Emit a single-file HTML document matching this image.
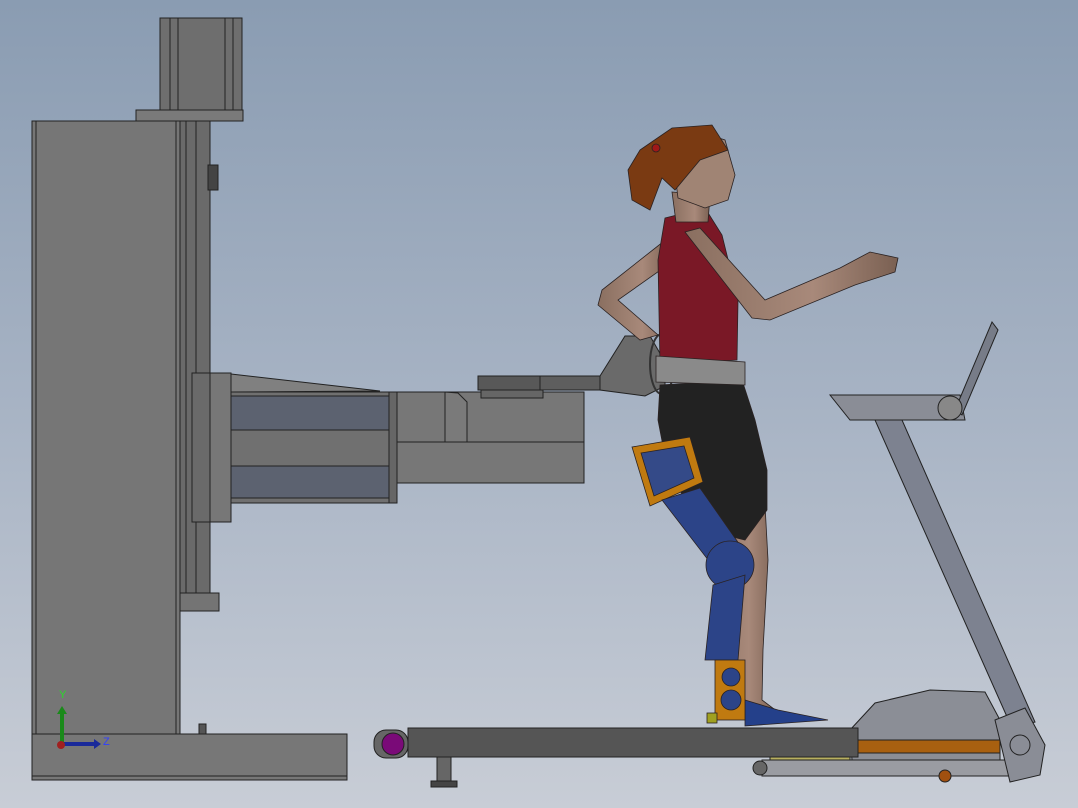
<!DOCTYPE html>
<html><head><meta charset="utf-8"><style>
html,body{margin:0;padding:0;width:1078px;height:808px;overflow:hidden}
svg{display:block}
</style></head><body>
<svg width="1078" height="808" viewBox="0 0 1078 808" xmlns="http://www.w3.org/2000/svg" font-family="Liberation Sans, sans-serif">
<defs>
<linearGradient id="bg" x1="0" y1="0" x2="0" y2="1">
<stop offset="0" stop-color="#8a9cb2"/><stop offset="0.5" stop-color="#a7b3c4"/><stop offset="1" stop-color="#c8cdd6"/>
</linearGradient>
<linearGradient id="skin" x1="0" y1="0" x2="1" y2="0"><stop offset="0" stop-color="#8a6f60"/><stop offset="0.6" stop-color="#a8897a"/><stop offset="1" stop-color="#7a6052"/></linearGradient>
</defs>
<rect width="1078" height="808" fill="url(#bg)"/>
<g stroke="#222" stroke-width="1">
<!-- motor -->
<rect x="160" y="18" width="82" height="92" fill="#6e6e6e"/>
<line x1="170" y1="18" x2="170" y2="110"/><line x1="178" y1="18" x2="178" y2="110"/><line x1="225" y1="18" x2="225" y2="110"/><line x1="233" y1="18" x2="233" y2="110"/>
<rect x="136" y="110" width="107" height="11" fill="#7a7a7a"/>
<!-- column -->
<rect x="32" y="121" width="148" height="614" fill="#767676"/>
<line x1="36" y1="121" x2="36" y2="735"/><line x1="176" y1="121" x2="176" y2="735"/>
<rect x="180" y="121" width="30" height="472" fill="#6a6a6a"/>
<line x1="186" y1="121" x2="186" y2="593"/><line x1="196" y1="121" x2="196" y2="593"/>
<rect x="208" y="165" width="10" height="25" fill="#444"/>
<rect x="180" y="593" width="39" height="18" fill="#747474"/>
<!-- base -->
<rect x="32" y="734" width="315" height="46" fill="#777"/>
<line x1="32" y1="776" x2="347" y2="776"/>
<rect x="199" y="724" width="7" height="10" fill="#555"/>
<!-- arm -->
<polygon points="231,374 380,391 231,392" fill="#808080"/>
<rect x="192" y="373" width="39" height="149" fill="#6a6a6a"/>
<rect x="210" y="373" width="21" height="149" fill="#777"/>
<rect x="231" y="392" width="166" height="111" fill="#707070"/>
<rect x="231" y="396" width="158" height="34" fill="#5c6270"/>
<rect x="231" y="466" width="158" height="32" fill="#5c6270"/>
<rect x="389" y="392" width="8" height="111" fill="#666"/>
<rect x="397" y="392" width="187" height="91" fill="#777"/>
<line x1="397" y1="442" x2="584" y2="442"/>
<polygon points="445,392 458,393 467,402 467,442 445,442" fill="#7a7a7a"/>
<rect x="478" y="376" width="122" height="14" fill="#585858"/>
<rect x="540" y="376" width="110" height="14" fill="#5e5e5e"/>
<rect x="481" y="390" width="62" height="8" fill="#666"/>
<!-- handle -->
<polygon points="600,376 625,336 650,336 665,362 665,386 645,396 600,390" fill="#6a6a6a"/>
<ellipse cx="662" cy="364" rx="12" ry="30" fill="none" stroke="#333" stroke-width="2"/>
</g>
<!-- treadmill -->
<g stroke="#222" stroke-width="1">
<polygon points="875,420 902,420 1035,722 1012,728" fill="#7d8290"/>
<polygon points="830,395 960,395 965,420 850,420" fill="#8a8d96"/>
<polygon points="955,410 992,322 998,330 962,415" fill="#777c88"/>
<circle cx="950" cy="408" r="12" fill="#888"/>
<polygon points="850,730 875,703 930,690 985,692 1000,720 1000,760 852,760" fill="#8b8e96"/>
<rect x="852" y="740" width="148" height="13" fill="#a86010"/>
<rect x="762" y="760" width="250" height="16" fill="#9a9ca2"/>
<rect x="770" y="752" width="80" height="8" fill="#b8b060"/>
<circle cx="760" cy="768" r="7" fill="#666"/>
<circle cx="945" cy="776" r="6" fill="#a05010"/>
<polygon points="995,720 1025,708 1045,745 1040,775 1010,782" fill="#8a8d96"/>
<circle cx="1020" cy="745" r="10" fill="none"/>
<rect x="408" y="728" width="450" height="29" fill="#555"/>
<rect x="374" y="730" width="34" height="28" rx="12" fill="#666"/>
<circle cx="393" cy="744" r="11" fill="#7a0a78"/>
<rect x="437" y="757" width="14" height="24" fill="#666"/>
<rect x="431" y="781" width="26" height="6" fill="#444"/>
</g>
<!-- person -->
<g stroke="#2a2222" stroke-width="0.8">
<!-- back arm -->
<path d="M668,238 L602,290 L598,305 L640,340 L658,335 L618,300 L672,262 Z" fill="url(#skin)"/>
<!-- legs -->
<polygon points="705,525 765,505 768,560 763,650 762,700 778,712 745,712 735,650 725,570" fill="url(#skin)"/>
<polygon points="745,700 778,710 828,720 745,726" fill="#24408a"/>
<!-- shorts -->
<path d="M660,385 L742,380 L755,420 L767,470 L767,510 L745,540 L705,530 L668,472 L658,420 Z" fill="#222"/>
<!-- torso -->
<path d="M665,218 L705,208 L722,235 L738,300 L737,360 L660,365 L658,260 Z" fill="#7a1826"/>
<!-- neck -->
<polygon points="672,192 710,195 708,222 676,222" fill="url(#skin)"/>
<!-- head -->
<path d="M672,150 L700,132 L725,140 L735,175 L728,200 L705,208 L678,198 Z" fill="#a08474"/>
<path d="M640,150 L672,128 L712,125 L728,150 L700,160 L675,190 L662,178 L650,210 L632,200 L628,170 Z" fill="#7a3a12"/>
<circle cx="656" cy="148" r="4" fill="#a01818"/>
<!-- front arm -->
<path d="M685,232 L700,228 L765,300 L840,268 L870,252 L898,258 L895,272 L855,285 L770,320 L752,318 Z" fill="url(#skin)"/>
<!-- belt -->
<polygon points="656,356 745,362 745,385 656,382" fill="#8a8a8a"/>
<!-- exo -->
<polygon points="632,447 690,437 703,482 650,506" fill="#c07a10"/>
<polygon points="641,453 684,446 694,478 654,496" fill="#344a88"/>
<polygon points="662,500 700,488 742,548 712,565" fill="#2c4488"/>
<circle cx="730" cy="565" r="24" fill="#2c4488"/>
<polygon points="713,585 745,575 738,660 705,660" fill="#2c4488"/>
<rect x="715" y="660" width="30" height="60" fill="#c07a10"/>
<circle cx="731" cy="677" r="9" fill="#2c4488"/>
<circle cx="731" cy="700" r="10" fill="#2c4488"/>
<rect x="707" y="713" width="10" height="10" fill="#a0a020"/>
</g>
<!-- axis triad -->
<line x1="62" y1="745" x2="62" y2="712" stroke="#1a8a1a" stroke-width="4"/>
<polygon points="57,714 67,714 62,706" fill="#1a8a1a"/>
<line x1="62" y1="744" x2="95" y2="744" stroke="#1a2a9a" stroke-width="4"/>
<polygon points="94,739 94,749 101,744" fill="#1a2a9a"/>
<circle cx="61" cy="745" r="4" fill="#a02020"/>
<text x="59" y="698" font-size="11" fill="#2bd62b">Y</text>
<text x="103" y="745" font-size="11" fill="#3040ff">Z</text>
</svg>
</body></html>
